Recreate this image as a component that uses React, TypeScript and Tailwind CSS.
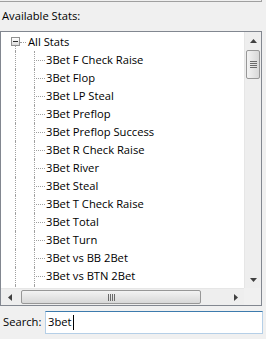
import React from "react";

const children = [
  "3Bet F Check Raise",
  "3Bet Flop",
  "3Bet LP Steal",
  "3Bet Preflop",
  "3Bet Preflop Success",
  "3Bet R Check Raise",
  "3Bet River",
  "3Bet Steal",
  "3Bet T Check Raise",
  "3Bet Total",
  "3Bet Turn",
  "3Bet vs BB 2Bet",
  "3Bet vs BTN 2Bet",
];

function ArrowUp() {
  return (
    <svg width="7" height="4" viewBox="0 0 7 4">
      <path d="M3.5 0 L7 4 L0 4 Z" fill="#404040" />
    </svg>
  );
}
function ArrowDown() {
  return (
    <svg width="7" height="4" viewBox="0 0 7 4">
      <path d="M0 0 L7 0 L3.5 4 Z" fill="#404040" />
    </svg>
  );
}
function ArrowLeft() {
  return (
    <svg width="4" height="7" viewBox="0 0 4 7">
      <path d="M4 0 L4 7 L0 3.5 Z" fill="#404040" />
    </svg>
  );
}
function ArrowRight() {
  return (
    <svg width="4" height="7" viewBox="0 0 4 7">
      <path d="M0 0 L4 3.5 L0 7 Z" fill="#404040" />
    </svg>
  );
}

export default function App() {
  return (
    <div
      className="w-[266px] h-[339px] bg-[#f0f0f0] overflow-hidden text-[11.2px] text-black"
      style={{ fontFamily: '"Segoe UI", "Open Sans", "Noto Sans", sans-serif' }}
    >
      <div className="h-[2px] w-[262px] border-b border-r border-[#a0a0a0]" />
      <div className="h-[29px] pl-[2px] pt-[6px] leading-[16px]">Available Stats:</div>

      {/* Tree box */}
      <div className="w-[262px] h-[275px] border border-[#828790] bg-white flex flex-col">
        <div className="flex h-[256px]">
          <div className="flex-1 overflow-hidden pt-[1px]">
            {/* root row */}
            <div className="flex h-[18px]">
              <div className="w-[10px]" />
              <div className="w-[9px] flex flex-col">
                <div className="h-[4px]" />
                <div className="h-[9px] w-[9px] border border-[#919191] bg-gradient-to-b from-white to-[#dcdcdc] flex items-center justify-center">
                  <div className="w-[5px] h-[1px] bg-[#2d2d2d]" />
                </div>
                <div className="flex-1 ml-[4px] border-l border-dotted border-[#a0a0a0]" />
              </div>
              <div className="w-[8px] flex items-center">
                <div className="w-[6px] border-t border-dotted border-[#a0a0a0]" />
              </div>
              <div className="leading-[18px]">All Stats</div>
            </div>
            {children.map((c) => (
              <div key={c} className="flex h-[18px]">
                <div className="w-[14px]" />
                <div className="w-[19px] border-l border-dotted border-[#a0a0a0]" />
                <div className="w-[12px] flex items-center border-l border-dotted border-[#a0a0a0]">
                  <div className="w-[9px] ml-[1px] border-t border-dotted border-[#a0a0a0]" />
                </div>
                <div className="leading-[18px] whitespace-nowrap">{c}</div>
              </div>
            ))}
            <div className="flex h-[18px]">
              <div className="w-[14px]" />
              <div className="w-[19px] border-l border-dotted border-[#a0a0a0]" />
              <div className="w-[12px] border-l border-dotted border-[#a0a0a0]" />
            </div>
          </div>
          {/* vertical scrollbar */}
          <div className="w-[17px] bg-[#eeeeee] flex flex-col border-l border-[#e6e6e6]">
            <div className="h-[17px] flex items-center justify-center">
              <ArrowUp />
            </div>
            <div className="h-[29px] mx-[1px] mt-[1px] rounded-[2px] border border-[#979797] bg-gradient-to-r from-[#f3f3f3] to-[#d8d8d8] flex flex-col items-center justify-center gap-[1px]">
              <div className="w-[7px] h-[1px] bg-[#6a6a6a]" />
              <div className="w-[7px] h-[1px] bg-[#6a6a6a]" />
              <div className="w-[7px] h-[1px] bg-[#6a6a6a]" />
              <div className="w-[7px] h-[1px] bg-[#6a6a6a]" />
            </div>
            <div className="flex-1" />
            <div className="h-[17px] flex items-center justify-center">
              <ArrowDown />
            </div>
          </div>
        </div>
        {/* horizontal scrollbar */}
        <div className="flex h-[17px]">
          <div className="flex-1 bg-[#eeeeee] flex border-t border-[#e6e6e6]">
            <div className="w-[17px] flex items-center justify-center">
              <ArrowLeft />
            </div>
            <div className="w-[180px] my-[1px] ml-[3px] rounded-[2px] border border-[#979797] bg-gradient-to-b from-[#f3f3f3] to-[#d8d8d8] flex items-center justify-center gap-[1px]">
              <div className="w-[1px] h-[7px] bg-[#6a6a6a]" />
              <div className="w-[1px] h-[7px] bg-[#6a6a6a]" />
              <div className="w-[1px] h-[7px] bg-[#6a6a6a]" />
              <div className="w-[1px] h-[7px] bg-[#6a6a6a]" />
            </div>
            <div className="flex-1" />
            <div className="w-[17px] flex items-center justify-center">
              <ArrowRight />
            </div>
          </div>
          <div className="w-[17px] bg-[#f0f0f0]" />
        </div>
      </div>

      {/* Search */}
      <div className="flex items-center mt-[4px] h-[24px]">
        <div className="w-[45px] pl-[3px] leading-[16px]">Search:</div>
        <div className="w-[218px] h-[23px] bg-white border border-[#b5cfe7] border-t-[#3d7bad] flex items-center pl-[2px]">
          <span className="leading-[16px]">3bet</span>
          <span className="w-[1px] h-[15px] bg-black ml-[1px]" />
        </div>
      </div>
    </div>
  );
}
